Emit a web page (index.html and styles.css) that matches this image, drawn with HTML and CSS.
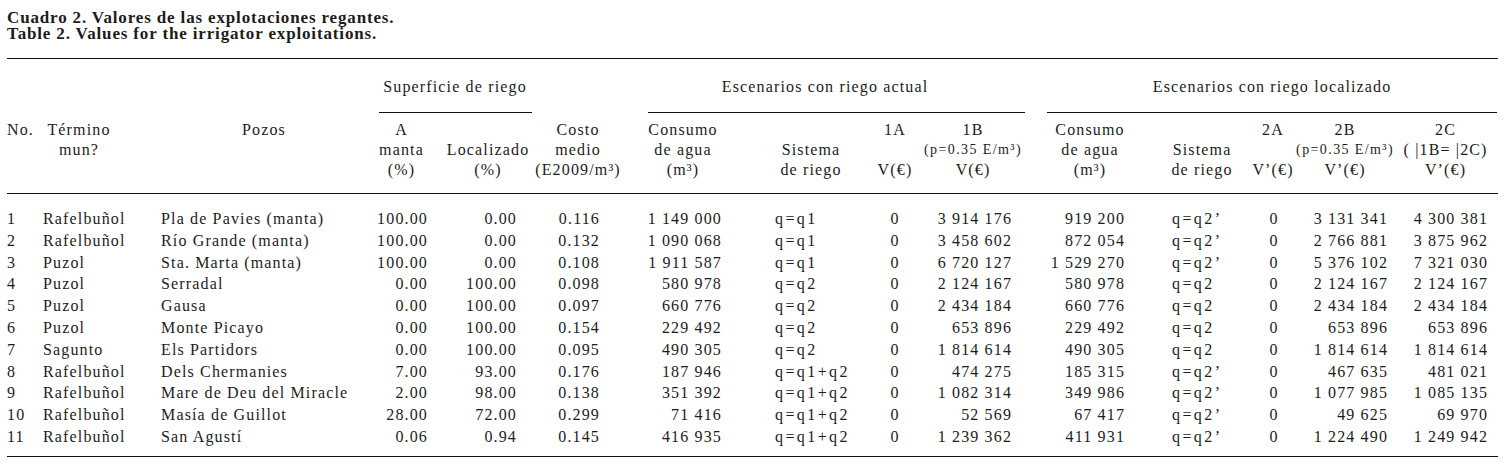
FILE: index.html
```html
<!DOCTYPE html>
<html lang="es">
<head>
<meta charset="utf-8">
<title>Cuadro 2. Valores de las explotaciones regantes</title>
<link rel="stylesheet" href="styles.css">
</head>
<body>
<div class="page">
  <div class="caption">
    <p>Cuadro 2. Valores de las explotaciones regantes.</p>
    <p>Table 2. Values for the irrigator exploitations.</p>
  </div>
  <table class="tbl">
    <colgroup>
      <col class="w1"><col class="w2"><col class="w3"><col class="w4"><col class="w5">
      <col class="w6"><col class="w7"><col class="w8"><col class="w9"><col class="w10">
      <col class="w11"><col class="w12"><col class="w13"><col class="w14"><col class="w15">
    </colgroup>
    <thead>
      <tr class="groups">
        <th colspan="3"></th>
        <th colspan="2" class="g g-sup"><div class="gt">Superficie de riego</div><div class="gr"></div></th>
        <th></th>
        <th colspan="4" class="g g-act"><div class="gt">Escenarios con riego actual</div><div class="gr"></div></th>
        <th colspan="5" class="g g-loc"><div class="gt">Escenarios con riego localizado</div><div class="gr"></div></th>
      </tr>
      <tr class="cols">
        <th><div class="h top left"><span>No.</span></div></th>
        <th><div class="h top"><span>Término</span><span>mun?</span></div></th>
        <th><div class="h top"><span>Pozos</span></div></th>
        <th><div class="h"><span>A</span><span>manta</span><span>(%)</span></div></th>
        <th><div class="h end"><span>Localizado</span><span>(%)</span></div></th>
        <th><div class="h"><span>Costo</span><span>medio</span><span>(E2009/m³)</span></div></th>
        <th><div class="h"><span>Consumo</span><span>de agua</span><span>(m³)</span></div></th>
        <th><div class="h end"><span>Sistema</span><span>de riego</span></div></th>
        <th><div class="h"><span>1A</span><span>V(€)</span></div></th>
        <th><div class="h"><span>1B</span><span class="sm">(p=0.35 E/m³)</span><span>V(€)</span></div></th>
        <th><div class="h"><span>Consumo</span><span>de agua</span><span>(m³)</span></div></th>
        <th><div class="h end"><span>Sistema</span><span>de riego</span></div></th>
        <th><div class="h"><span>2A</span><span>V’(€)</span></div></th>
        <th><div class="h"><span>2B</span><span class="sm">(p=0.35 E/m³)</span><span>V’(€)</span></div></th>
        <th><div class="h"><span>2C</span><span>( |1B= |2C)</span><span>V’(€)</span></div></th>
      </tr>
    </thead>
    <tbody>
      <tr><td>1</td><td>Rafelbuñol</td><td>Pla de Pavies (manta)</td><td>100.00</td><td>0.00</td><td>0.116</td><td>1 149 000</td><td>q=q1</td><td>0</td><td>3 914 176</td><td>919 200</td><td>q=q2’</td><td>0</td><td>3 131 341</td><td>4 300 381</td></tr>
      <tr><td>2</td><td>Rafelbuñol</td><td>Río Grande (manta)</td><td>100.00</td><td>0.00</td><td>0.132</td><td>1 090 068</td><td>q=q1</td><td>0</td><td>3 458 602</td><td>872 054</td><td>q=q2’</td><td>0</td><td>2 766 881</td><td>3 875 962</td></tr>
      <tr><td>3</td><td>Puzol</td><td>Sta. Marta (manta)</td><td>100.00</td><td>0.00</td><td>0.108</td><td>1 911 587</td><td>q=q1</td><td>0</td><td>6 720 127</td><td>1 529 270</td><td>q=q2’</td><td>0</td><td>5 376 102</td><td>7 321 030</td></tr>
      <tr><td>4</td><td>Puzol</td><td>Serradal</td><td>0.00</td><td>100.00</td><td>0.098</td><td>580 978</td><td>q=q2</td><td>0</td><td>2 124 167</td><td>580 978</td><td>q=q2</td><td>0</td><td>2 124 167</td><td>2 124 167</td></tr>
      <tr><td>5</td><td>Puzol</td><td>Gausa</td><td>0.00</td><td>100.00</td><td>0.097</td><td>660 776</td><td>q=q2</td><td>0</td><td>2 434 184</td><td>660 776</td><td>q=q2</td><td>0</td><td>2 434 184</td><td>2 434 184</td></tr>
      <tr><td>6</td><td>Puzol</td><td>Monte Picayo</td><td>0.00</td><td>100.00</td><td>0.154</td><td>229 492</td><td>q=q2</td><td>0</td><td>653 896</td><td>229 492</td><td>q=q2</td><td>0</td><td>653 896</td><td>653 896</td></tr>
      <tr><td>7</td><td>Sagunto</td><td>Els Partidors</td><td>0.00</td><td>100.00</td><td>0.095</td><td>490 305</td><td>q=q2</td><td>0</td><td>1 814 614</td><td>490 305</td><td>q=q2</td><td>0</td><td>1 814 614</td><td>1 814 614</td></tr>
      <tr><td>8</td><td>Rafelbuñol</td><td>Dels Chermanies</td><td>7.00</td><td>93.00</td><td>0.176</td><td>187 946</td><td>q=q1+q2</td><td>0</td><td>474 275</td><td>185 315</td><td>q=q2’</td><td>0</td><td>467 635</td><td>481 021</td></tr>
      <tr><td>9</td><td>Rafelbuñol</td><td>Mare de Deu del Miracle</td><td>2.00</td><td>98.00</td><td>0.138</td><td>351 392</td><td>q=q1+q2</td><td>0</td><td>1 082 314</td><td>349 986</td><td>q=q2’</td><td>0</td><td>1 077 985</td><td>1 085 135</td></tr>
      <tr><td>10</td><td>Rafelbuñol</td><td>Masía de Guillot</td><td>28.00</td><td>72.00</td><td>0.299</td><td>71 416</td><td>q=q1+q2</td><td>0</td><td>52 569</td><td>67 417</td><td>q=q2’</td><td>0</td><td>49 625</td><td>69 970</td></tr>
      <tr><td>11</td><td>Rafelbuñol</td><td>San Agustí</td><td>0.06</td><td>0.94</td><td>0.145</td><td>416 935</td><td>q=q1+q2</td><td>0</td><td>1 239 362</td><td>411 931</td><td>q=q2’</td><td>0</td><td>1 224 490</td><td>1 249 942</td></tr>
    </tbody>
  </table>
</div>
</body>
</html>
```

FILE: styles.css
```css
* { box-sizing: border-box; }
html, body { margin: 0; padding: 0; background: #ffffff; }
body {
  font-family: "Liberation Serif", "Times New Roman", serif;
  color: #1c1c1c;
}
.page { padding: 10px 7px 0 7px; width: 1505px; }

.caption {
  font-weight: bold;
  font-size: 17px;
  line-height: 16px;
  letter-spacing: 0.85px;
}
.caption p { margin: 0; }

.tbl {
  margin-top: 16px;
  border-collapse: separate;
  border-spacing: 0;
  table-layout: fixed;
  width: 1491px;
  font-size: 16px;
  letter-spacing: 1.15px;
  border-top: 1px solid #111;
  border-bottom: 1px solid #111;
}
.w1 { width: 33px; }
.w2 { width: 80px; }
.w3 { width: 252px; }
.w4 { width: 68px; }
.w5 { width: 95px; }
.w6 { width: 90px; }
.w7 { width: 115px; }
.w8 { width: 125px; }
.w9 { width: 60px; }
.w10 { width: 110px; }
.w11 { width: 115px; }
.w12 { width: 95px; }
.w13 { width: 55px; }
.w14 { width: 95px; }
.w15 { width: 103px; }

.tbl th { font-weight: normal; padding: 0; vertical-align: top; white-space: nowrap; }

/* group header row */
.groups th.g { padding-top: 18px; }
.gt { line-height: 20px; text-align: center; }
.gr { height: 1px; background: #111; margin-top: 15px; }
.g-sup .gt { padding-left: 3px; }
.g-sup .gr { margin-left: 7px; margin-right: 3px; }
.g-act .gt { padding-right: 10px; }
.g-act .gr { margin-left: 23px; margin-right: 10px; }
.g-loc .gt { padding-left: 11px; }
.g-loc .gr { margin-left: 12px; margin-right: 1px; }

/* column header row */
.cols th { padding-top: 7px; padding-bottom: 13px; border-bottom: 1px solid #111; }
.h {
  height: 60px;
  display: flex;
  flex-direction: column;
  align-items: center;
  justify-content: space-between;
  line-height: 20px;
}
.h.top { justify-content: flex-start; }
.h.end { justify-content: flex-end; }
.h.left { align-items: flex-start; }
.sm { font-size: 14px; letter-spacing: 1.4px; }

.cols th:nth-child(2) { padding-left: 3px; padding-right: 5px; }
.cols th:nth-child(3) { padding-left: 40px; padding-right: 4px; }
.cols th:nth-child(4) { padding-right: 9px; }
.cols th:nth-child(5) { padding-left: 1px; }
.cols th:nth-child(6) { padding-right: 4px; }
.cols th:nth-child(7) { padding-left: 1px; }
.cols th:nth-child(8) { padding-left: 17px; }
.cols th:nth-child(10) { padding-right: 14px; }
.cols th:nth-child(11) { padding-right: 5px; }
.cols th:nth-child(12) { padding-left: 9px; }
.cols th:nth-child(13) { padding-left: 1px; }
.cols th:nth-child(14) { padding-right: 5px; }
.cols th:nth-child(15) { padding-right: 2px; }

/* body rows */
.tbl td { padding: 0; line-height: 21.8px; white-space: nowrap; text-align: right; }
.tbl tbody tr:first-child td { padding-top: 14px; }
.tbl tbody tr:last-child td { padding-bottom: 8px; }

.tbl td:nth-child(1) { text-align: left; }
.tbl td:nth-child(2) { text-align: left; padding-left: 3px; }
.tbl td:nth-child(3) { text-align: left; padding-left: 41px; }
.tbl td:nth-child(4) { padding-right: 12px; }
.tbl td:nth-child(5) { padding-right: 18px; }
.tbl td:nth-child(6) { padding-right: 25px; }
.tbl td:nth-child(7) { padding-right: 18px; }
.tbl td:nth-child(8) { text-align: left; padding-left: 35px; letter-spacing: 2.4px; }
.tbl td:nth-child(9) { text-align: center; }
.tbl td:nth-child(10) { padding-right: 23px; }
.tbl td:nth-child(11) { padding-right: 25px; }
.tbl td:nth-child(12) { text-align: left; padding-left: 22px; letter-spacing: 2.4px; }
.tbl td:nth-child(13) { text-align: center; padding-left: 3px; }
.tbl td:nth-child(14) { padding-right: 7px; }
.tbl td:nth-child(15) { padding-right: 10px; }
```
